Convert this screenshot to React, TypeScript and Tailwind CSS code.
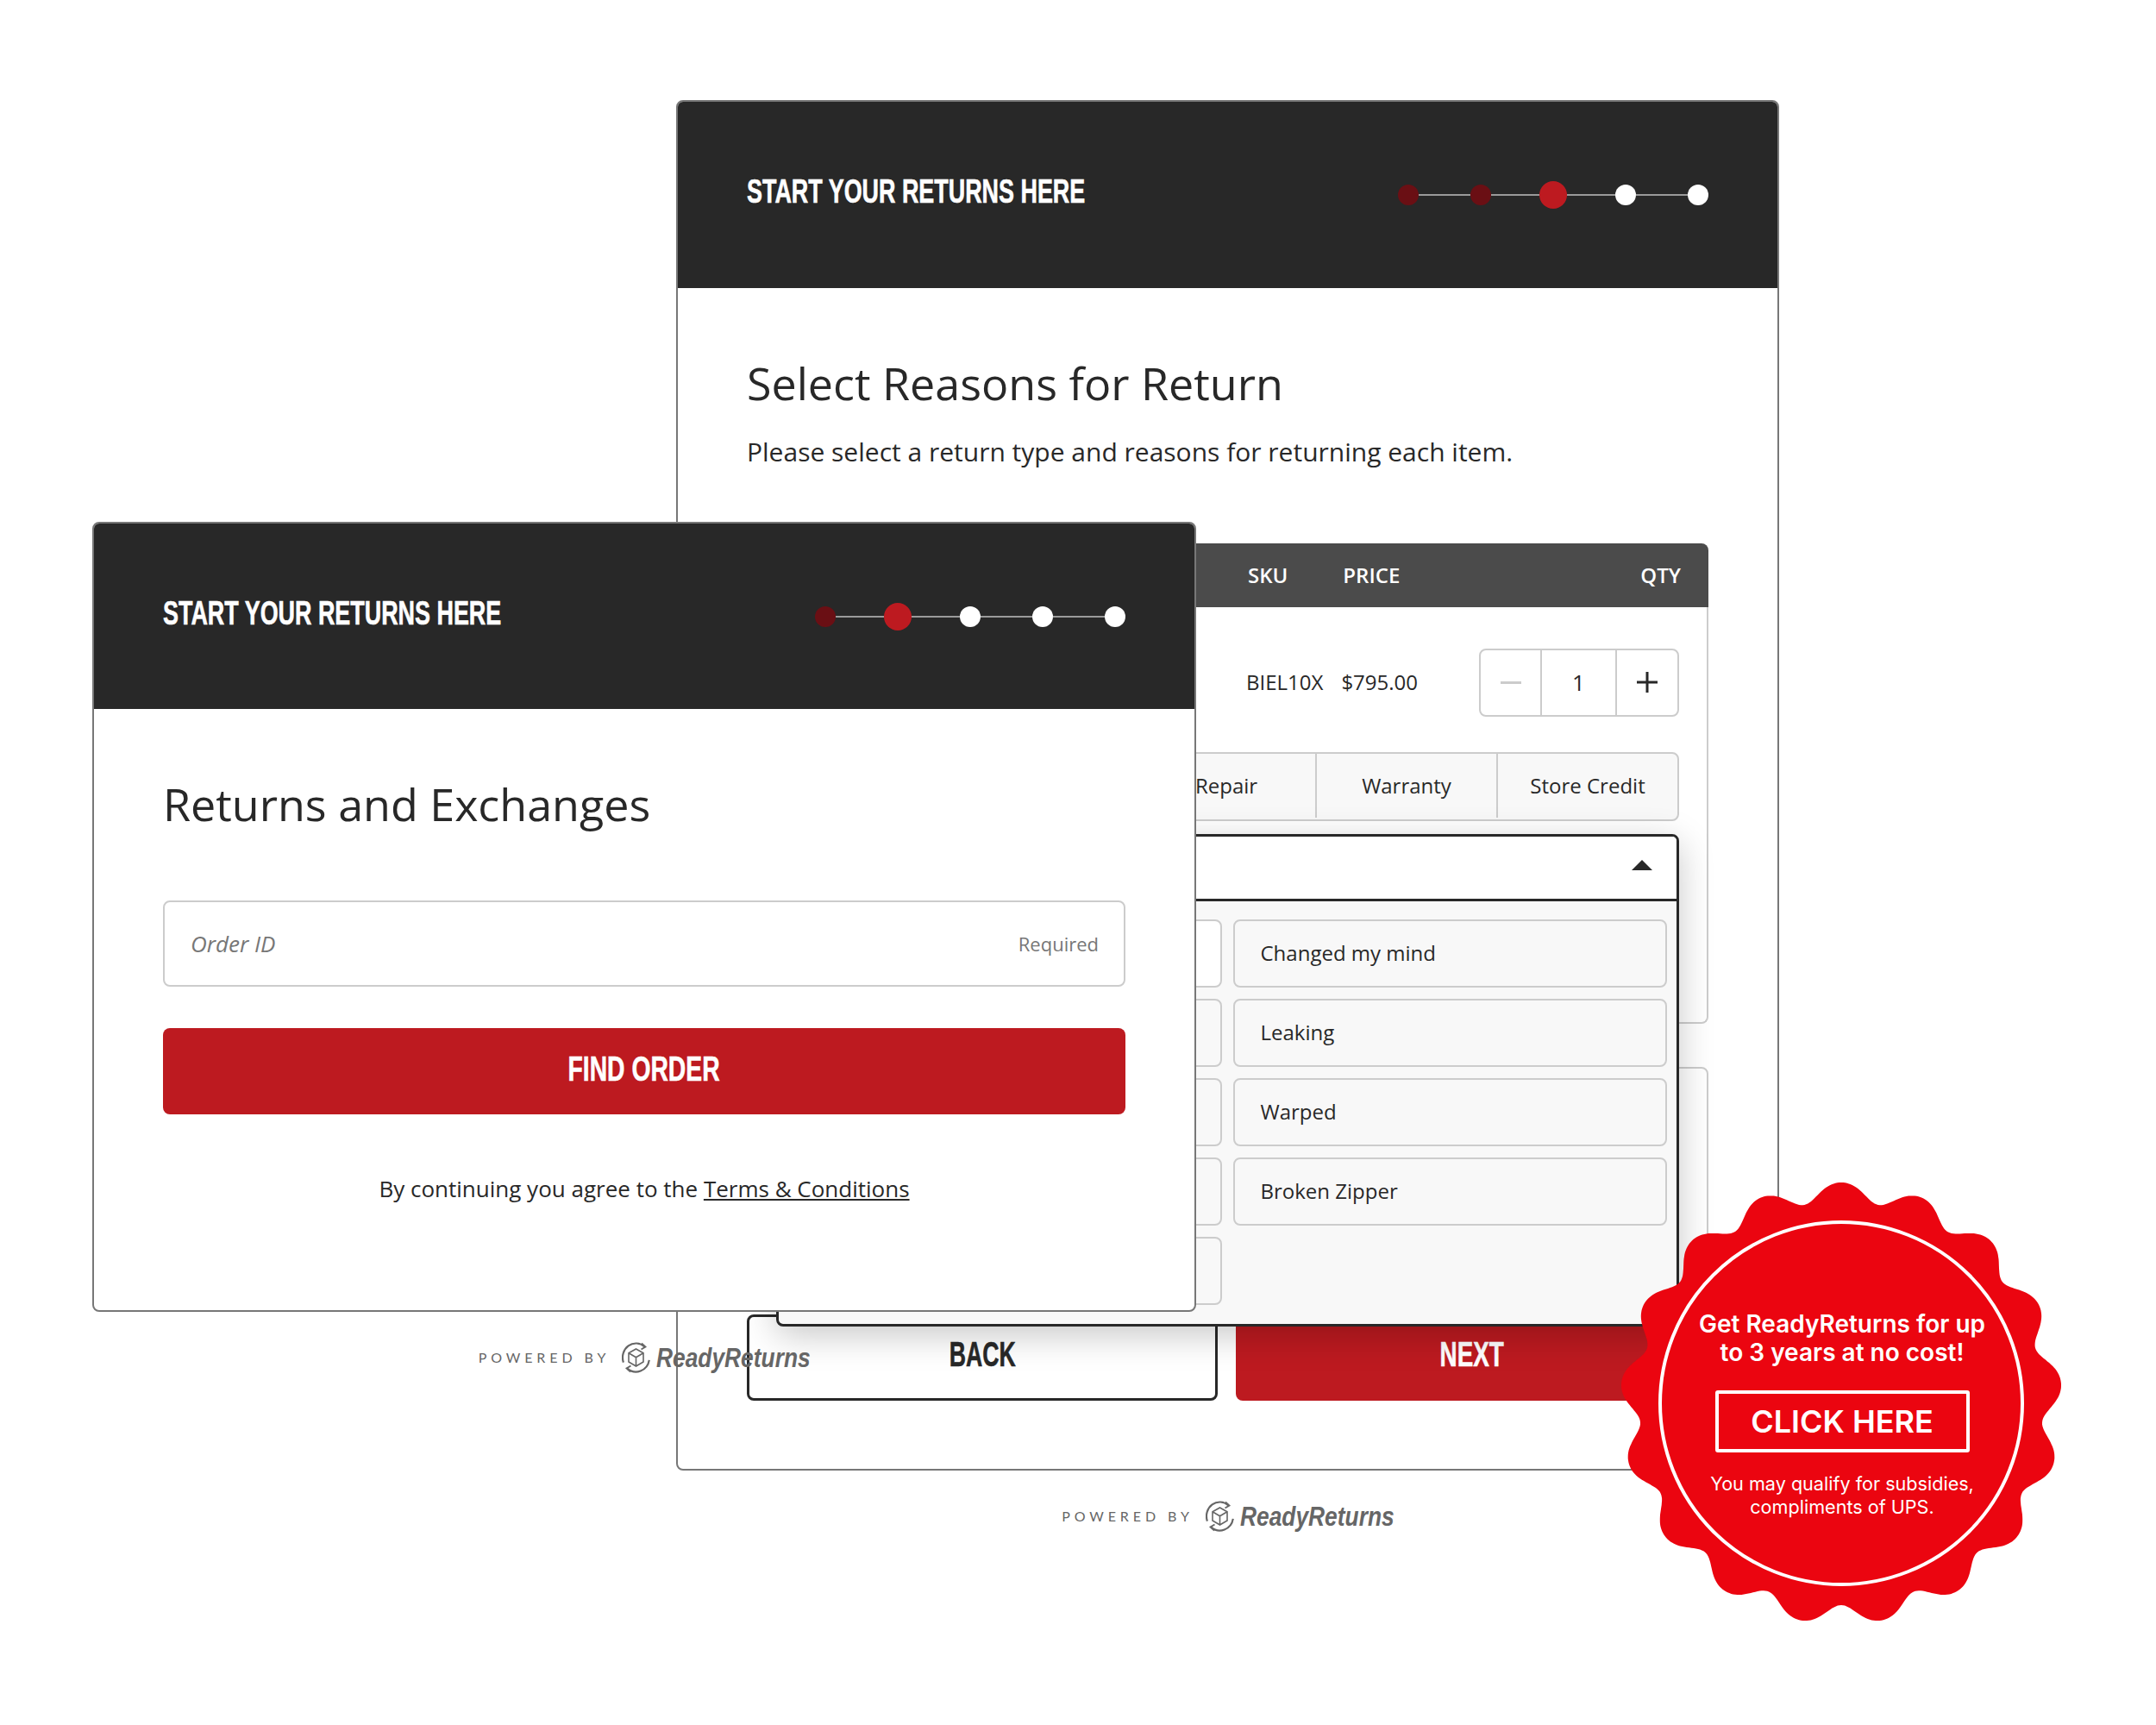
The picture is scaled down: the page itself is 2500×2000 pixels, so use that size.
import React from "react";

const badgePath =
  Array.from({ length: 720 }, (_, i) => {
    const t = (i / 720) * Math.PI * 2;
    const r = 246 + 11 * Math.cos(17 * t) - 1 * Math.cos(34 * t);
    const x = 257 + r * Math.sin(t);
    const y = 256 - r * Math.cos(t);
    return `${i ? "L" : "M"}${x.toFixed(1)} ${y.toFixed(1)}`;
  }).join("") + "Z";

type Dot = "done" | "current" | "todo";

function Dots({ steps }: { steps: Dot[] }) {
  return (
    <div className="flex items-center">
      {steps.map((s, i) => (
        <React.Fragment key={i}>
          {i > 0 && (
            <div
              className={
                s === "current" || steps[i - 1] === "current"
                  ? "h-[2px] w-[56px] bg-[#9a9a9a]"
                  : "h-[2px] w-[60px] bg-[#9a9a9a]"
              }
            />
          )}
          <div
            className={
              s === "current"
                ? "h-[32px] w-[32px] rounded-full bg-[#bd1a20]"
                : s === "done"
                  ? "h-[24px] w-[24px] rounded-full bg-[#6a0f14]"
                  : "h-[24px] w-[24px] rounded-full bg-white"
            }
          />
        </React.Fragment>
      ))}
    </div>
  );
}

function CardHeader({ steps, tall }: { steps: Dot[]; tall?: boolean }) {
  return (
    <div
      className={
        tall
          ? "flex h-[216px] items-center justify-between bg-[#282828] px-[80px]"
          : "flex h-[215px] items-center justify-between bg-[#282828] px-[80px]"
      }
    >
      <div className="w-[392px] origin-left scale-x-[0.69] pb-[8px] font-['Liberation_Sans',sans-serif] text-[39px] leading-[44px] font-bold whitespace-nowrap text-white [-webkit-text-stroke:0.6px_#ffffff]">
        START YOUR RETURNS HERE
      </div>
      <Dots steps={steps} />
    </div>
  );
}

function LogoIcon() {
  return (
    <svg width="33" height="36" viewBox="0 0 33 36" fill="none" stroke="#666666" className="shrink-0">
      <path d="M1.9 23.6 A15.5 16.5 0 0 1 26.5 5.4" strokeWidth="2.2" />
      <path d="M31.8 20.9 A15.5 16.5 0 0 1 6.5 30.6" strokeWidth="2.2" />
      <path d="M23 1.5 L27.5 5.5 L22.5 8.5" strokeWidth="1.8" />
      <path d="M10 34.5 L5.5 30.5 L10.5 27.5" strokeWidth="1.8" />
      <path d="M16.5 8 L25 12.8 V23 L16.5 28 L8 23 V12.8 Z M8 12.8 L16.5 17.8 L25 12.8 M16.5 17.8 V28" strokeWidth="1.6" />
    </svg>
  );
}

function Powered() {
  return (
    <div className="flex h-[36px] items-center justify-center text-[#666666]">
      <span className="font-['Lato',sans-serif] text-[16px] leading-none font-normal tracking-[4.9px]">POWERED BY</span>
      <span className="ml-[14px]">
        <LogoIcon />
      </span>
      <span className="ml-[7px] w-[178px] origin-left scale-x-[0.85] font-['Liberation_Sans',sans-serif] text-[31px] leading-none font-bold whitespace-nowrap italic">
        ReadyReturns
      </span>
    </div>
  );
}

function Reason({ label, white }: { label?: string; white?: boolean }) {
  return (
    <div
      className={
        white
          ? "flex h-[79px] items-center rounded-[8px] border-2 border-[#cccccc] bg-white pb-[2px] pl-[30px] text-[24px] text-[#282828]"
          : "flex h-[79px] items-center rounded-[8px] border-2 border-[#cccccc] bg-[#f8f8f8] pb-[2px] pl-[30px] text-[24px] text-[#282828]"
      }
    >
      {label}
    </div>
  );
}

function Dropdown() {
  return (
    <div className="absolute top-[337px] left-[34px] z-10 h-[571px] w-[1047px] overflow-hidden rounded-[8px] border-[3px] border-[#282828] bg-[#f8f8f8] shadow-[0_10px_40px_rgba(0,0,0,0.22)]">
      <div className="flex h-[75px] items-center justify-end border-b-[3px] border-[#282828] bg-white pr-[28px]">
        <svg width="24" height="12" viewBox="0 0 24 12" className="mb-[6px]">
          <path d="M12 0 L24 12 H0 Z" fill="#282828" />
        </svg>
      </div>
      <div className="grid grid-cols-2 gap-x-[13px] gap-y-[13px] pt-[21px] pr-[11px] pl-[10px]">
        <Reason white />
        <Reason label="Changed my mind" />
        <Reason />
        <Reason label="Leaking" />
        <Reason />
        <Reason label="Warped" />
        <Reason />
        <Reason label="Broken Zipper" />
        <Reason />
      </div>
    </div>
  );
}

function BackWindow() {
  return (
    <div className="absolute top-[116px] left-[784px] w-[1279px]">
      <div className="h-[1589px] overflow-hidden rounded-[8px] border-2 border-[#777777] bg-white">
        <CardHeader tall steps={["done", "done", "current", "todo", "todo"]} />
        <div className="px-[80px]">
          <h1 className="pt-[75px] text-[52px] leading-[70px] font-normal text-[#282828]">Select Reasons for Return</h1>
          <p className="mt-[23px] text-[30px] leading-[44px] text-[#282828]">
            Please select a return type and reasons for returning each item.
          </p>
          <div className="relative mt-[84px]">
            <div className="flex h-[74px] items-center rounded-t-[8px] bg-[#4b4b4b] pr-[32px] pl-[581px] text-[24px] font-semibold text-white">
              <span>SKU</span>
              <span className="ml-[64px]">PRICE</span>
              <span className="ml-auto">QTY</span>
            </div>
            <div className="h-[483px] rounded-b-[8px] border-2 border-t-0 border-[#cccccc] pt-[48px] pr-[32px] pl-[31px]">
              <div className="flex h-[80px] items-center pb-[2px] text-[24px] text-[#282828]">
                <span className="ml-[546px]">BIEL10X</span>
                <span className="ml-[21px]">$795.00</span>
                <div className="ml-auto flex h-[79px] w-[232px] rounded-[8px] border-2 border-[#cccccc]">
                  <div className="flex w-[71px] items-center justify-center border-r-2 border-[#cccccc]">
                    <div className="h-[3px] w-[24px] bg-[#cccccc]" />
                  </div>
                  <div className="flex flex-1 items-center justify-center text-[26px]">1</div>
                  <div className="flex w-[72px] items-center justify-center border-l-2 border-[#cccccc]">
                    <svg width="24" height="24" viewBox="0 0 24 24" stroke="#282828" strokeWidth="3">
                      <path d="M12 0 V24 M0 12 H24" />
                    </svg>
                  </div>
                </div>
              </div>
              <div className="mt-[40px] flex h-[80px] rounded-[8px] border-2 border-[#cccccc] bg-[#f8f8f8] pb-[2px] text-[24px] text-[#282828]">
                <div className="flex-1" />
                <div className="flex w-[211px] items-center justify-center border-r-2 border-[#cccccc] pl-[3px]">Repair</div>
                <div className="flex w-[210px] items-center justify-center border-r-2 border-[#cccccc]">Warranty</div>
                <div className="flex w-[208px] items-center justify-center">Store Credit</div>
              </div>
            </div>
            <div className="mt-[50px] h-[263px] rounded-[8px] border-2 border-[#cccccc]" />
            <div className="mt-[24px] flex gap-[21px]">
              <div className="flex h-[100px] w-[546px] items-center justify-center rounded-[8px] border-[3px] border-[#282828] pb-[6px] font-['Liberation_Sans',sans-serif] text-[41px] font-bold text-[#282828]">
                <span className="scale-x-[0.65] [-webkit-text-stroke:0.6px_#282828]">BACK</span>
              </div>
              <div className="flex h-[100px] flex-1 items-center justify-center rounded-[8px] bg-[#bd1a20] pb-[6px] font-['Liberation_Sans',sans-serif] text-[41px] font-bold text-white">
                <span className="scale-x-[0.68] [-webkit-text-stroke:0.6px_#ffffff]">NEXT</span>
              </div>
            </div>
            <Dropdown />
          </div>
        </div>
      </div>
      <div className="mt-[35px]">
        <Powered />
      </div>
    </div>
  );
}

function FrontWindow() {
  return (
    <div className="absolute top-[605px] left-[107px] z-10 w-[1280px]">
      <div className="h-[916px] overflow-hidden rounded-[8px] border-2 border-[#777777] bg-white">
        <CardHeader steps={["done", "current", "todo", "todo", "todo"]} />
        <div className="px-[80px]">
          <h1 className="pt-[75px] text-[52px] leading-[70px] font-normal text-[#282828]">Returns and Exchanges</h1>
          <div className="mt-[77px] flex h-[100px] items-center justify-between rounded-[8px] border-2 border-[#cccccc] pr-[29px] pl-[30px]">
            <span className="text-[26px] text-[#777777] italic">Order ID</span>
            <span className="text-[22px] text-[#777777]">Required</span>
          </div>
          <div className="mt-[48px] flex h-[100px] items-center justify-center rounded-[8px] bg-[#bd1a20] pb-[4px] font-['Liberation_Sans',sans-serif] text-[41px] font-bold text-white">
            <span className="scale-x-[0.69] whitespace-nowrap [-webkit-text-stroke:0.6px_#ffffff]">FIND ORDER</span>
          </div>
          <p className="mt-[68px] text-center text-[26px] leading-[36px] text-[#282828]">
            By continuing you agree to the <span className="underline">Terms &amp; Conditions</span>
          </p>
        </div>
      </div>
      <div className="mt-[35px]">
        <Powered />
      </div>
    </div>
  );
}

function Badge() {
  return (
    <div className="absolute top-[1371px] left-[1878px] z-20 h-[512px] w-[514px]">
      <svg width="514" height="512" viewBox="0 0 514 512" className="absolute inset-0">
        <path d={badgePath} fill="#eb0510" />
        <circle cx="257" cy="256" r="210" fill="none" stroke="#ffffff" strokeWidth="4" />
      </svg>
      <div className="relative flex flex-col items-center pt-[148px] pl-[2px] font-['Inter',sans-serif] text-white">
        <div className="text-center text-[28px] leading-[33px] font-semibold">
          Get ReadyReturns for up
          <br />
          to 3 years at no cost!
        </div>
        <div className="mt-[27px] flex h-[72px] w-[295px] items-center justify-center rounded-[3px] border-[4px] border-white text-[36px] font-semibold">
          CLICK HERE
        </div>
        <div className="mt-[23px] text-center text-[21.6px] leading-[27px]">
          You may qualify for subsidies,
          <br />
          compliments of UPS.
        </div>
      </div>
    </div>
  );
}

export default function App() {
  return (
    <div className="relative h-[2000px] w-[2500px] overflow-hidden bg-white font-['Open_Sans',sans-serif]">
      <BackWindow />
      <FrontWindow />
      <Badge />
    </div>
  );
}
